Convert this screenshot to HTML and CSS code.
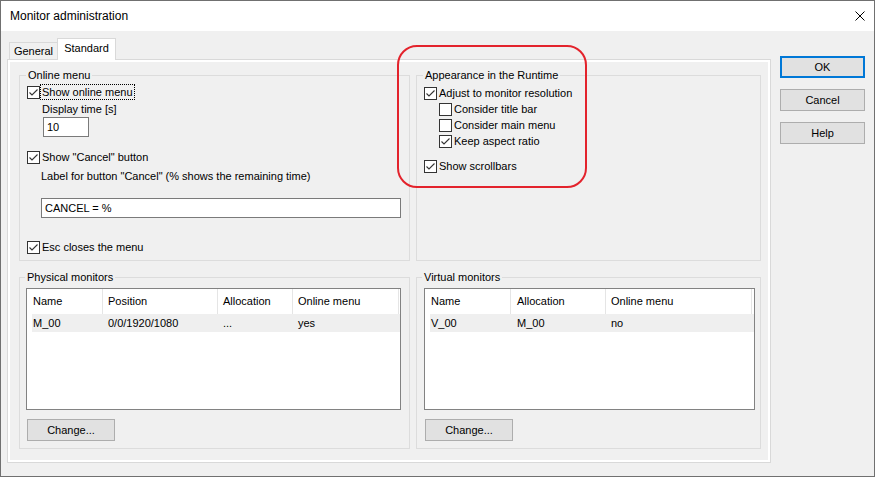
FILE: index.html
```html
<!DOCTYPE html>
<html>
<head>
<meta charset="utf-8">
<title>Monitor administration</title>
<link rel="stylesheet" href="styles.css">
</head>
<body>
<div class="window">
  <div class="titlebar">
    <span class="title">Monitor administration</span>
    <svg class="close" viewBox="0 0 10 10" width="10" height="10"><path d="M0.5 0.5 L9.5 9.5 M9.5 0.5 L0.5 9.5" stroke="#000" stroke-width="1" fill="none"/></svg>
  </div>
  <div class="main">
    <div class="tabctl">
      <div class="tabs">
        <div class="tab tab-general">General</div>
        <div class="tab tab-active">Standard</div>
      </div>
      <div class="panel">
        <div class="page">
          <fieldset class="grp g-online">
            <legend class="lg6">Online menu</legend>
            <div class="cb r-first"><span class="box"><svg viewBox="0 0 11 11" width="11" height="11"><polyline points="1.5,5.5 4,8 9.5,2.5" fill="none" stroke="#333" stroke-width="1.1"/></svg></span><span class="focus">Show online menu</span></div>
            <div class="line r-disp">Display time [s]</div>
            <div class="field f-time">10</div>
            <div class="cb r-cancel"><span class="box"><svg viewBox="0 0 11 11" width="11" height="11"><polyline points="1.5,5.5 4,8 9.5,2.5" fill="none" stroke="#333" stroke-width="1.1"/></svg></span><span>Show "Cancel" button</span></div>
            <div class="line r-label">Label for button "Cancel" (% shows the remaining time)</div>
            <div class="field f-cancel">CANCEL = %</div>
            <div class="cb r-esc"><span class="box"><svg viewBox="0 0 11 11" width="11" height="11"><polyline points="1.5,5.5 4,8 9.5,2.5" fill="none" stroke="#333" stroke-width="1.1"/></svg></span><span>Esc closes the menu</span></div>
          </fieldset>
          <fieldset class="grp g-appear">
            <legend class="lg6">Appearance in the Runtime</legend>
            <div class="cb a-first"><span class="box"><svg viewBox="0 0 11 11" width="11" height="11"><polyline points="1.5,5.5 4,8 9.5,2.5" fill="none" stroke="#333" stroke-width="1.1"/></svg></span><span>Adjust to monitor resolution</span></div>
            <div class="cb sub"><span class="box"></span><span>Consider title bar</span></div>
            <div class="cb sub"><span class="box"></span><span>Consider main menu</span></div>
            <div class="cb sub"><span class="box"><svg viewBox="0 0 11 11" width="11" height="11"><polyline points="1.5,5.5 4,8 9.5,2.5" fill="none" stroke="#333" stroke-width="1.1"/></svg></span><span>Keep aspect ratio</span></div>
            <div class="cb a-scroll"><span class="box"><svg viewBox="0 0 11 11" width="11" height="11"><polyline points="1.5,5.5 4,8 9.5,2.5" fill="none" stroke="#333" stroke-width="1.1"/></svg></span><span>Show scrollbars</span></div>
          </fieldset>
          <fieldset class="grp g-phys">
            <legend class="lg5">Physical monitors</legend>
            <div class="list l-phys">
              <div class="lhead">
                <span class="c1">Name</span><span class="c2">Position</span><span class="c3">Allocation</span><span class="c4">Online menu</span>
              </div>
              <div class="lrow">
                <span class="c1">M_00</span><span class="c2">0/0/1920/1080</span><span class="c3">...</span><span class="c4">yes</span>
              </div>
            </div>
            <div class="btn b-phys">Change...</div>
          </fieldset>
          <fieldset class="grp g-virt">
            <legend class="lg5">Virtual monitors</legend>
            <div class="list l-virt">
              <div class="lhead">
                <span class="c1">Name</span><span class="c2">Allocation</span><span class="c3">Online menu</span>
              </div>
              <div class="lrow">
                <span class="c1">V_00</span><span class="c2">M_00</span><span class="c3">no</span>
              </div>
            </div>
            <div class="btn b-virt">Change...</div>
          </fieldset>
        </div>
      </div>
    </div>
    <div class="side">
      <div class="btn ok">OK</div>
      <div class="btn">Cancel</div>
      <div class="btn">Help</div>
    </div>
  </div>
  <div class="annot"></div>
</div>
</body>
</html>
```
FILE: styles.css
```css
* { box-sizing: border-box; }
html, body { margin: 0; padding: 0; }
body {
  width: 875px; height: 477px; overflow: hidden;
  font-family: "Liberation Sans", Arial, sans-serif;
  font-size: 11px; color: #000; background: #fff;
}
.window {
  position: relative;
  width: 875px; height: 477px;
  border: 1px solid #707070;
  background: #f0f0f0;
}
.titlebar {
  height: 30px; background: #fff;
  display: flex; align-items: center; justify-content: space-between;
  padding: 0 9px 0 9px;
}
.title { font-size: 12px; }
.close { display: block; width: 10px; height: 10px; }

.main { display: flex; align-items: flex-start; padding-left: 6px; }
.tabctl { width: 764px; }
.tabs { display: flex; align-items: flex-end; height: 28px; padding-left: 2px; }
.tab {
  height: 17px; border: 1px solid #d9d9d9; border-bottom: none;
  line-height: 16px; text-align: center; background: #f0f0f0;
}
.tab-general { width: 49px; }
.tab-active {
  width: 59px; height: 22px; margin-left: -1px; margin-bottom: -1px;
  background: #fff; line-height: 18px; position: relative; z-index: 1;
}
.panel { height: 404px; border: 1px solid #d9d9d9; background: #fff; padding: 2px; }
.page {
  height: 100%; background: #f0f0f0;
  display: grid;
  grid-template-columns: 391px 345px;
  grid-template-rows: 193px 179px;
  column-gap: 6px; row-gap: 9px;
  padding: 6px 0 0 9px;
}

.grp { margin: 0; padding: 0; border: 1px solid #dcdcdc; min-width: 0; }
.grp legend { padding: 0 2px; line-height: 14px; }
.lg6 { margin-left: 6px; }
.lg5 { margin-left: 5px; }

.cb { display: flex; align-items: center; height: 16px; }
.box {
  width: 13px; height: 13px; border: 1px solid #333; background: #fff;
  margin-right: 2px; flex: none;
}
.box svg { display: block; }
.focus { border: 1px dotted #000; margin-left: -2px; padding: 0 1px 0 1px; line-height: 14px; }
.line { height: 16px; line-height: 16px; }
.field {
  border: 1px solid #7a7a7a; background: #fff; height: 20px;
  line-height: 18px; padding-left: 3px;
}

.g-online .cb { padding-left: 7px; }
.r-first { margin-top: 2px; }
.r-disp { margin-top: 1px; padding-left: 22px; }
.f-time { width: 46px; margin-left: 23px; }
.r-cancel { margin-top: 12px; }
.r-label { margin-top: 3px; padding-left: 21px; }
.f-cancel { width: 360px; margin-left: 21px; margin-top: 14px; }
.r-esc { margin-top: 21px; }

.g-appear .cb { padding-left: 7px; }
.a-first { margin-top: 3px; }
.g-appear .sub { padding-left: 22px; }
.a-scroll { margin-top: 9px; }

.list { border: 1px solid #828282; background: #fff; height: 122px; margin-top: 4px; }
.lhead { display: flex; height: 25px; line-height: 25px; }
.lhead span { border-right: 1px solid #e5e5e5; padding-left: 5px; flex: none; }
.lhead .c1 { padding-left: 6px; }
.lrow { display: flex; height: 18px; line-height: 18px; background: #efefef; margin-left: 5px; }
.lrow span { padding-left: 5px; flex: none; }
.lrow .c1 { padding-left: 1px; }

.l-phys { width: 375px; margin-left: 6px; }
.l-phys .lhead .c1 { width: 76px; }
.l-phys .c2 { width: 115px; }
.l-phys .c3 { width: 75px; }
.l-phys .c4 { width: 106px; }
.l-phys .lrow .c1 { width: 71px; }

.l-virt { width: 331px; margin-left: 7px; }
.l-virt .lhead .c1 { width: 86px; }
.l-virt .c2 { width: 95px; padding-left: 6px; }
.l-virt .lhead .c2 { padding-left: 6px; }
.l-virt .c3 { width: 146px; }
.l-virt .lrow .c1 { width: 81px; }

.btn {
  width: 88px; height: 22px; border: 1px solid #adadad; background: #e1e1e1;
  text-align: center; line-height: 20px;
}
.b-phys { margin-left: 7px; margin-top: 9px; }
.b-virt { margin-left: 8px; margin-top: 9px; }

.side { margin-left: 9px; padding-top: 25px; display: flex; flex-direction: column; gap: 11px; }
.side .btn { width: 85px; }
.side .ok { border: 2px solid #0078d7; line-height: 18px; }

.annot {
  position: absolute; left: 396px; top: 44px; width: 190px; height: 143px;
  border: 2px solid #e3232c; border-radius: 20px;
}
```
